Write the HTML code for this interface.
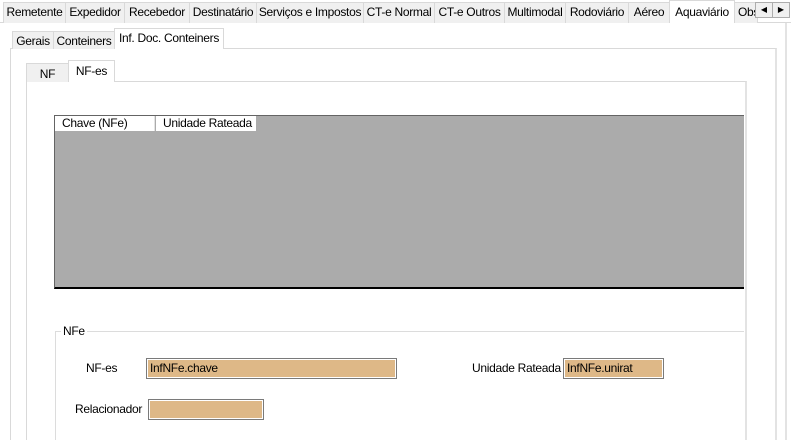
<!DOCTYPE html>
<html><head><meta charset="utf-8"><style>
*{margin:0;padding:0;box-sizing:border-box}
html,body{width:791px;height:440px;overflow:hidden}
body{background:#fff;position:relative;font-family:"Liberation Sans",sans-serif;font-size:12px;color:#000}
.a{position:absolute}
.t{position:absolute;background:#f0f0f0;border:1px solid #d9d9d9;border-bottom:none;line-height:18px;text-align:center;white-space:nowrap;overflow:hidden;letter-spacing:-0.3px}
.s{background:#fff;z-index:2}
.in{position:absolute;background:#deb887;border:1px solid #7a7a7a;box-shadow:inset 0 0 0 1px #fff;line-height:18px;padding-left:3px;letter-spacing:-0.3px}
.lb{position:absolute;letter-spacing:-0.3px}
</style></head><body>
<div class="a" style="left:0;top:22px;width:791px;height:1px;background:#d9d9d9"></div>
<div class="t" style="left:3px;top:2px;width:63px;height:21px">Remetente</div>
<div class="t" style="left:65px;top:2px;width:60px;height:21px">Expedidor</div>
<div class="t" style="left:124px;top:2px;width:66px;height:21px">Recebedor</div>
<div class="t" style="left:189px;top:2px;width:68px;height:21px">Destinatário</div>
<div class="t" style="left:256px;top:2px;width:108px;height:21px">Serviços e Impostos</div>
<div class="t" style="left:363px;top:2px;width:72px;height:21px">CT-e Normal</div>
<div class="t" style="left:434px;top:2px;width:71px;height:21px">CT-e Outros</div>
<div class="t" style="left:504px;top:2px;width:62px;height:21px">Multimodal</div>
<div class="t" style="left:565px;top:2px;width:64px;height:21px">Rodoviário</div>
<div class="t" style="left:628px;top:2px;width:42px;height:21px">Aéreo</div>
<div class="t s" style="left:669px;top:0px;width:66px;height:23px;line-height:22px">Aquaviário</div>
<div class="t" style="left:734px;top:2px;width:24px;height:21px;text-align:left;padding-left:3px">Obs</div>
<div class="a" style="left:755px;top:2px;width:18px;height:16px;background:#f0f0f0;border:1px solid #adadad;font-size:8px;text-align:center;line-height:14px;z-index:3">◀</div>
<div class="a" style="left:772px;top:2px;width:18px;height:16px;background:#f0f0f0;border:1px solid #adadad;font-size:8px;text-align:center;line-height:14px;z-index:3">▶</div>
<div class="a" style="left:785px;top:23px;width:2px;height:417px;background:#e3e3e3"></div>

<div class="a" style="left:10px;top:48px;width:767px;height:392px;border:1px solid #d9d9d9;border-bottom:none;border-right:2px solid #e3e3e3"></div>
<div class="t" style="left:12px;top:31px;width:42px;height:18px">Gerais</div>
<div class="t" style="left:53px;top:31px;width:62px;height:18px">Conteiners</div>
<div class="t s" style="left:114px;top:28px;width:110px;height:21px;line-height:18px">Inf. Doc. Conteiners</div>

<div class="a" style="left:26px;top:81px;width:721px;height:359px;border:1px solid #d9d9d9;border-bottom:none;border-right:2px solid #e3e3e3"></div>
<div class="t" style="left:26px;top:63px;width:43px;height:19px;line-height:20px">NF</div>
<div class="t s" style="left:68px;top:60px;width:47px;height:22px;line-height:20px">NF-es</div>

<div class="a" style="left:54px;top:115px;width:690px;height:174px;background:#ababab;border-top:1px solid #646464;border-left:1px solid #646464;border-bottom:2px solid #000"></div>
<div class="a" style="left:55px;top:116px;width:100px;height:15px;background:#fff;border-right:1px solid #e3e3e3;line-height:15px;padding-left:7px;letter-spacing:-0.3px">Chave (NFe)</div>
<div class="a" style="left:156px;top:116px;width:100px;height:15px;background:#fff;line-height:15px;padding-left:7px;letter-spacing:-0.3px">Unidade Rateada</div>

<div class="a" style="left:55px;top:331px;width:689px;height:109px;border-top:1px solid #dcdcdc;border-left:1px solid #dcdcdc"></div>
<div class="lb" style="left:61px;top:324px;background:#fff;padding:0 2px">NFe</div>

<div class="lb" style="left:86px;top:361px">NF-es</div>
<div class="in" style="left:146px;top:358px;width:251px;height:21px">InfNFe.chave</div>
<div class="lb" style="left:472px;top:361px">Unidade Rateada</div>
<div class="in" style="left:563px;top:358px;width:101px;height:21px">InfNFe.unirat</div>
<div class="lb" style="left:75px;top:402px">Relacionador</div>
<div class="in" style="left:148px;top:399px;width:116px;height:21px"></div>
</body></html>
